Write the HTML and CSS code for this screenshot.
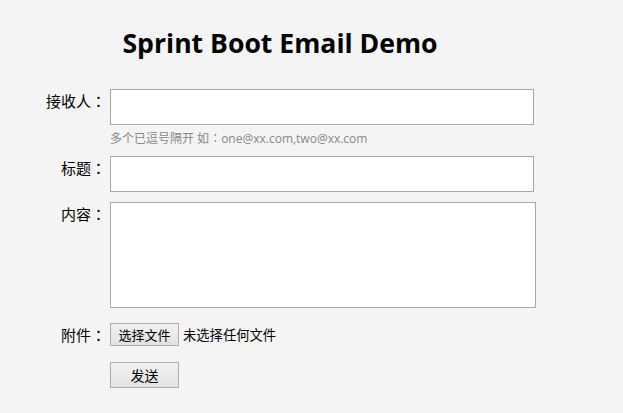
FILE: index.html
```html
<!DOCTYPE html>
<html lang="zh">
<head>
<meta charset="utf-8">
<title>Sprint Boot Email Demo</title>
<link rel="stylesheet" href="styles.css">
</head>
<body>
<div class="page">
  <h1 class="title">Sprint Boot Email Demo</h1>
  <form class="form">
    <label class="label">接收人<span class="colon" lang="ja">：</span></label>
    <div class="field">
      <input class="input" type="text">
      <div class="hint">多个已逗号隔开 如<span class="colon" lang="ja">：</span>one@xx.com,two@xx.com</div>
    </div>
    <label class="label">标题<span class="colon" lang="ja">：</span></label>
    <div class="field"><input class="input" type="text"></div>
    <label class="label">内容<span class="colon" lang="ja">：</span></label>
    <div class="field"><textarea class="textarea"></textarea></div>
    <label class="label label-file">附件<span class="colon" lang="ja">：</span></label>
    <div class="field file-row">
      <button type="button" class="btn btn-file">选择文件</button>
      <span class="file-status">未选择任何文件</span>
    </div>
    <span></span>
    <div class="field"><button type="button" class="btn btn-send">发送</button></div>
  </form>
</div>
</body>
</html>
```
FILE: styles.css
```css
html, body {
  margin: 0;
  padding: 0;
  background: #f4f4f4;
}
body {
  font-family: "Noto Sans CJK SC", "Open Sans", sans-serif;
  color: #000;
  text-spacing-trim: space-all;
}
.page {
  width: 560px;
}
.title {
  margin: 0;
  padding-top: 23px;
  height: 40px;
  text-align: center;
  font-family: "Open Sans", "Noto Sans CJK SC", sans-serif;
  font-weight: 700;
  font-size: 26.6px;
  line-height: 40px;
}
.form {
  margin-top: 26px;
  display: grid;
  grid-template-columns: 106px 430px;
  column-gap: 4px;
  row-gap: 10px;
}
.label {
  text-align: right;
  font-size: 15px;
  line-height: 20px;
  padding-top: 2px;
}
.colon {
  font-family: "Noto Sans CJK JP", sans-serif;
  display: inline-block;
  width: 1em;
  text-align: center;
}
.field {
  display: flex;
  flex-direction: column;
}
.input {
  box-sizing: border-box;
  width: 424px;
  height: 36px;
  border: 1px solid #a9a9a9;
  background: #fff;
  margin: 0;
  padding: 0 4px;
  font-size: 14px;
}
.hint {
  margin-top: 4px;
  height: 17px;
  font-family: "Open Sans", "Noto Sans CJK SC", sans-serif;
  font-size: 12px;
  line-height: 17px;
  color: #888;
}
.textarea {
  box-sizing: border-box;
  width: 426px;
  height: 106px;
  border: 1px solid #a9a9a9;
  background: #fff;
  margin: 0;
  padding: 2px;
  resize: none;
  font-family: inherit;
}
.label-file {
  padding-top: 7px;
}
.file-row {
  flex-direction: row;
  align-items: center;
  padding-top: 5px;
}
.btn {
  box-sizing: border-box;
  margin: 0;
  border: 1px solid #adadad;
  border-radius: 0;
  background: linear-gradient(#f2f2f2, #e2e2e2);
  font-family: "Noto Sans CJK SC", sans-serif;
  font-size: 13px;
  color: #000;
  padding: 0;
}
.btn-file {
  width: 69px;
  height: 23px;
  line-height: 21px;
}
.file-status {
  margin-left: 4px;
  font-size: 13.3px;
}
.btn-send {
  margin-top: 6px;
  width: 69px;
  height: 26px;
  font-size: 14px;
}
```
